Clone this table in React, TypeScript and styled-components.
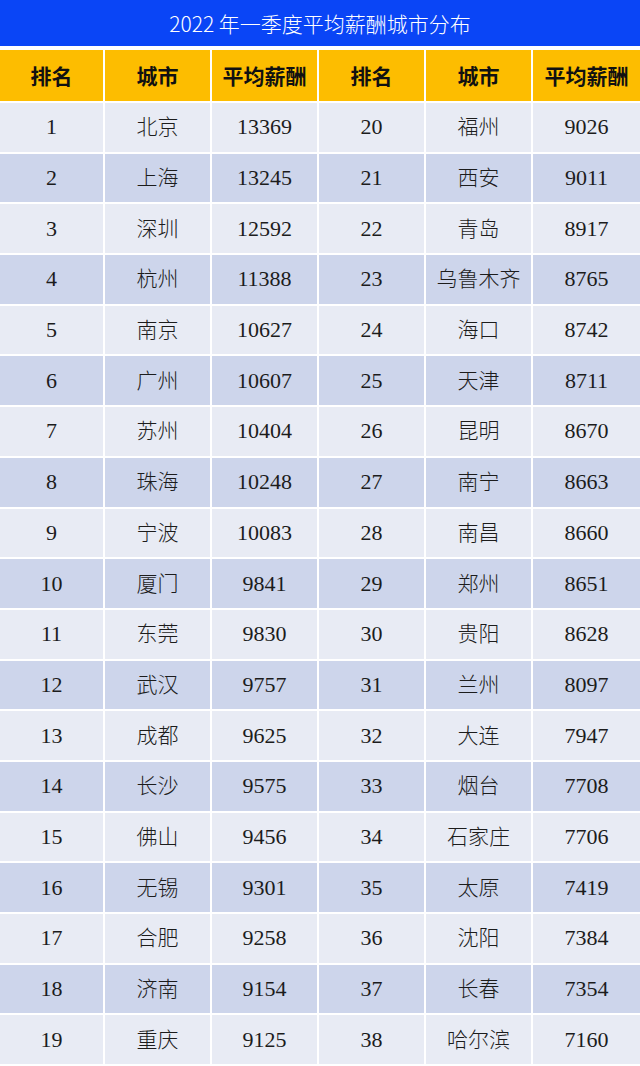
import { createGlobalStyle } from "styled-components"
import styled from "styled-components"

const GlobalStyle = createGlobalStyle`
  html, body {
    margin: 0;
    padding: 0;
    background: #ffffff;
  }
`

const Page = styled.div`
  width: 640px;
  height: 1066px;
  overflow: hidden;
  background: #fff;
`

const Title = styled.h1`
  margin: 0 0 4px;
  height: 46px;
  background: #0a45f6;
  color: #ffffff;
  font-family: "Noto Sans CJK SC", sans-serif;
  font-weight: 300;
  font-size: 21px;
  display: flex;
  align-items: center;
  justify-content: center;
`

const Table = styled.div`
  display: grid;
  grid-template-columns: 103px 105px 105px 105px 105px 107px;
  grid-template-rows: 51px;
  grid-auto-rows: 48.7px;
  column-gap: 2px;
  row-gap: 2px;
`

const HeadCell = styled.div`
  background: #fdbd00;
  color: #111;
  font-family: "Noto Sans CJK SC", sans-serif;
  font-weight: 700;
  font-size: 21px;
  line-height: 1;
  display: flex;
  align-items: center;
  justify-content: center;
`

const Cell = styled.div<{ $alt: boolean; $text?: boolean }>`
  background: ${p => (p.$alt ? "#cdd5eb" : "#e8ebf4")};
  color: #1c1c1c;
  font-family: ${p => (p.$text ? `"Noto Sans CJK SC", sans-serif` : `"Liberation Serif", serif`)};
  font-weight: ${p => (p.$text ? 300 : 400)};
  font-size: ${p => (p.$text ? "21px" : "22px")};
  line-height: 1;
  padding-bottom: ${p => (p.$text ? "3px" : "0")};
  box-sizing: border-box;
  display: flex;
  align-items: center;
  justify-content: center;
`

const left: [string, number][] = [
  ["北京", 13369], ["上海", 13245], ["深圳", 12592], ["杭州", 11388], ["南京", 10627],
  ["广州", 10607], ["苏州", 10404], ["珠海", 10248], ["宁波", 10083], ["厦门", 9841],
  ["东莞", 9830], ["武汉", 9757], ["成都", 9625], ["长沙", 9575], ["佛山", 9456],
  ["无锡", 9301], ["合肥", 9258], ["济南", 9154], ["重庆", 9125],
]

const right: [string, number][] = [
  ["福州", 9026], ["西安", 9011], ["青岛", 8917], ["乌鲁木齐", 8765], ["海口", 8742],
  ["天津", 8711], ["昆明", 8670], ["南宁", 8663], ["南昌", 8660], ["郑州", 8651],
  ["贵阳", 8628], ["兰州", 8097], ["大连", 7947], ["烟台", 7708], ["石家庄", 7706],
  ["太原", 7419], ["沈阳", 7384], ["长春", 7354], ["哈尔滨", 7160],
]

const headers = ["排名", "城市", "平均薪酬", "排名", "城市", "平均薪酬"]

export default function App() {
  return (
    <Page>
      <GlobalStyle />
      <Title>2022 年一季度平均薪酬城市分布</Title>
      <Table>
        {headers.map((h, i) => (
          <HeadCell key={"h" + i}>{h}</HeadCell>
        ))}
        {left.map((row, i) => {
          const alt = i % 2 === 1
          const r = right[i]
          return [
            <Cell key={"a" + i} $alt={alt}>{i + 1}</Cell>,
            <Cell key={"b" + i} $alt={alt} $text>{row[0]}</Cell>,
            <Cell key={"c" + i} $alt={alt}>{row[1]}</Cell>,
            <Cell key={"d" + i} $alt={alt}>{i + 20}</Cell>,
            <Cell key={"e" + i} $alt={alt} $text>{r[0]}</Cell>,
            <Cell key={"f" + i} $alt={alt}>{r[1]}</Cell>,
          ]
        })}
      </Table>
    </Page>
  )
}
